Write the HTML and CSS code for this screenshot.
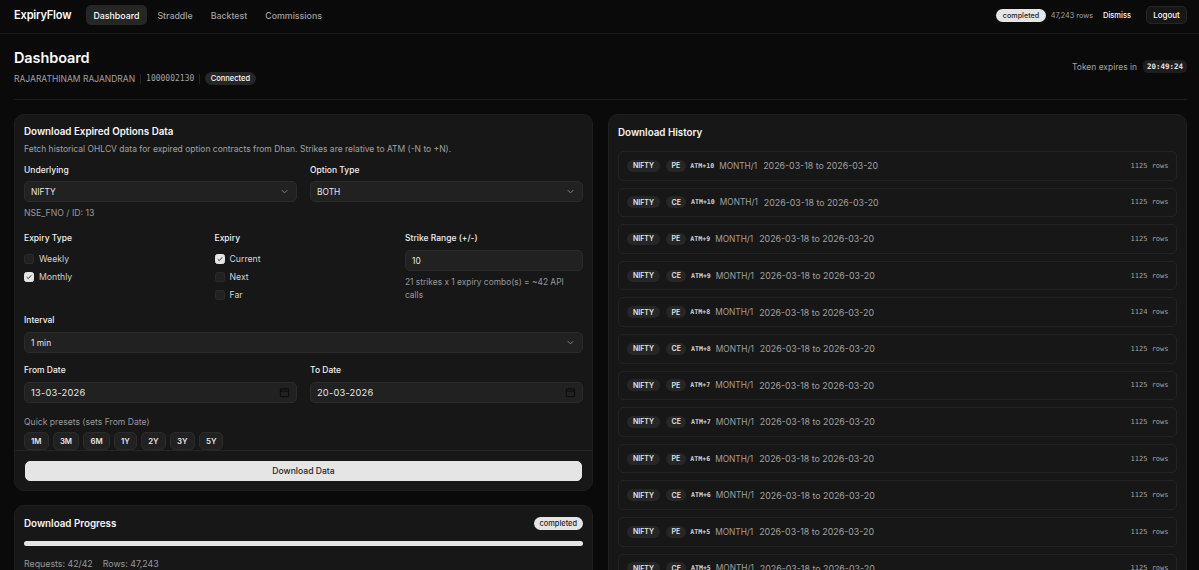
FILE: index.html
```html
<!DOCTYPE html>
<html lang="en">
<head>
<meta charset="utf-8">
<title>ExpiryFlow</title>
<link rel="stylesheet" href="styles.css">
</head>
<body>
<header class="topbar">
  <div class="brand">ExpiryFlow</div>
  <nav class="nav">
    <a class="nav-item active">Dashboard</a>
    <a class="nav-item">Straddle</a>
    <a class="nav-item">Backtest</a>
    <a class="nav-item">Commissions</a>
  </nav>
  <div class="top-right">
    <span class="pill-light top-pill">completed</span>
    <span class="top-rows">47,243 rows</span>
    <span class="dismiss">Dismiss</span>
    <span class="logout">Logout</span>
  </div>
</header>
<main class="main">
  <section class="page-head">
    <div>
      <h1 class="title">Dashboard</h1>
      <div class="meta">
        <span class="meta-name">RAJARATHINAM RAJANDRAN</span>
        <span class="meta-sep"></span>
        <span class="meta-id">1000002130</span>
        <span class="meta-sep"></span>
        <span class="conn">Connected</span>
      </div>
    </div>
    <div class="token">
      <span>Token expires in</span>
      <span class="timer">20:49:24</span>
    </div>
  </section>
  <div class="columns">
    <div class="col">
      <section class="card form-card">
        <div class="form-body">
          <h2 class="card-title">Download Expired Options Data</h2>
          <p class="desc">Fetch historical OHLCV data for expired option contracts from Dhan. Strikes are relative to ATM (-N to +N).</p>
          <div class="grid2 row-a">
            <div>
              <div class="label">Underlying</div>
              <div class="field"><span>NIFTY</span><svg class="chev" viewBox="0 0 16 16"><path d="M4 6l4 4 4-4"/></svg></div>
              <div class="hint hint-a">NSE_FNO / ID: 13</div>
            </div>
            <div>
              <div class="label">Option Type</div>
              <div class="field"><span>BOTH</span><svg class="chev" viewBox="0 0 16 16"><path d="M4 6l4 4 4-4"/></svg></div>
            </div>
          </div>
          <div class="grid3">
            <div>
              <div class="label">Expiry Type</div>
              <div class="checks">
                <div class="check"><span class="box"></span>Weekly</div>
                <div class="check"><span class="box on"><svg viewBox="0 0 12 12"><path d="M2.6 6.2l2.3 2.3 4.4-5"/></svg></span>Monthly</div>
              </div>
            </div>
            <div>
              <div class="label">Expiry</div>
              <div class="checks">
                <div class="check"><span class="box on"><svg viewBox="0 0 12 12"><path d="M2.6 6.2l2.3 2.3 4.4-5"/></svg></span>Current</div>
                <div class="check"><span class="box"></span>Next</div>
                <div class="check"><span class="box"></span>Far</div>
              </div>
            </div>
            <div>
              <div class="label">Strike Range (+/-)</div>
              <div class="field"><span>10</span></div>
              <div class="hint hint-b">21 strikes x 1 expiry combo(s) = ~42 API calls</div>
            </div>
          </div>
          <div class="block-interval">
            <div class="label">Interval</div>
            <div class="field"><span>1 min</span><svg class="chev" viewBox="0 0 16 16"><path d="M4 6l4 4 4-4"/></svg></div>
          </div>
          <div class="grid2 row-d">
            <div>
              <div class="label">From Date</div>
              <div class="field date"><span>13-03-2026</span><svg class="cal" viewBox="0 0 12 12"><rect x="1.5" y="2" width="9" height="8.5" rx="1"/><path d="M1.5 4.5h9"/></svg></div>
            </div>
            <div>
              <div class="label">To Date</div>
              <div class="field date"><span>20-03-2026</span><svg class="cal" viewBox="0 0 12 12"><rect x="1.5" y="2" width="9" height="8.5" rx="1"/><path d="M1.5 4.5h9"/></svg></div>
            </div>
          </div>
          <div class="presets-label">Quick presets (sets From Date)</div>
          <div class="presets">
            <span class="preset">1M</span><span class="preset">3M</span><span class="preset">6M</span><span class="preset">1Y</span><span class="preset">2Y</span><span class="preset">3Y</span><span class="preset">5Y</span>
          </div>
        </div>
        <div class="form-foot"><button class="submit" type="button">Download Data</button></div>
      </section>
      <section class="card progress-card">
        <div class="progress-head">
          <h2 class="card-title">Download Progress</h2>
          <span class="pill-light">completed</span>
        </div>
        <div class="bar"></div>
        <div class="stats"><span>Requests: 42/42</span><span>Rows: 47,243</span></div>
      </section>
    </div>
    <div class="col">
      <section class="card history">
        <h2 class="card-title history-title">Download History</h2>
        <div class="rows">
          <div class="row"><span class="tag tag-n">NIFTY</span><span class="tag tag-o">PE</span><span class="atm">ATM+10</span><span class="mm">MONTH/1</span><span class="range">2026-03-18 to 2026-03-20</span><span class="cnt">1125 rows</span></div>
          <div class="row"><span class="tag tag-n">NIFTY</span><span class="tag tag-o">CE</span><span class="atm">ATM+10</span><span class="mm">MONTH/1</span><span class="range">2026-03-18 to 2026-03-20</span><span class="cnt">1125 rows</span></div>
          <div class="row"><span class="tag tag-n">NIFTY</span><span class="tag tag-o">PE</span><span class="atm">ATM+9</span><span class="mm">MONTH/1</span><span class="range">2026-03-18 to 2026-03-20</span><span class="cnt">1125 rows</span></div>
          <div class="row"><span class="tag tag-n">NIFTY</span><span class="tag tag-o">CE</span><span class="atm">ATM+9</span><span class="mm">MONTH/1</span><span class="range">2026-03-18 to 2026-03-20</span><span class="cnt">1125 rows</span></div>
          <div class="row"><span class="tag tag-n">NIFTY</span><span class="tag tag-o">PE</span><span class="atm">ATM+8</span><span class="mm">MONTH/1</span><span class="range">2026-03-18 to 2026-03-20</span><span class="cnt">1124 rows</span></div>
          <div class="row"><span class="tag tag-n">NIFTY</span><span class="tag tag-o">CE</span><span class="atm">ATM+8</span><span class="mm">MONTH/1</span><span class="range">2026-03-18 to 2026-03-20</span><span class="cnt">1125 rows</span></div>
          <div class="row"><span class="tag tag-n">NIFTY</span><span class="tag tag-o">PE</span><span class="atm">ATM+7</span><span class="mm">MONTH/1</span><span class="range">2026-03-18 to 2026-03-20</span><span class="cnt">1125 rows</span></div>
          <div class="row"><span class="tag tag-n">NIFTY</span><span class="tag tag-o">CE</span><span class="atm">ATM+7</span><span class="mm">MONTH/1</span><span class="range">2026-03-18 to 2026-03-20</span><span class="cnt">1125 rows</span></div>
          <div class="row"><span class="tag tag-n">NIFTY</span><span class="tag tag-o">PE</span><span class="atm">ATM+6</span><span class="mm">MONTH/1</span><span class="range">2026-03-18 to 2026-03-20</span><span class="cnt">1125 rows</span></div>
          <div class="row"><span class="tag tag-n">NIFTY</span><span class="tag tag-o">CE</span><span class="atm">ATM+6</span><span class="mm">MONTH/1</span><span class="range">2026-03-18 to 2026-03-20</span><span class="cnt">1125 rows</span></div>
          <div class="row"><span class="tag tag-n">NIFTY</span><span class="tag tag-o">PE</span><span class="atm">ATM+5</span><span class="mm">MONTH/1</span><span class="range">2026-03-18 to 2026-03-20</span><span class="cnt">1125 rows</span></div>
          <div class="row"><span class="tag tag-n">NIFTY</span><span class="tag tag-o">CE</span><span class="atm">ATM+5</span><span class="mm">MONTH/1</span><span class="range">2026-03-18 to 2026-03-20</span><span class="cnt">1125 rows</span></div>
        </div>
      </section>
    </div>
  </div>
</main>
</body>
</html>
```
FILE: styles.css
```css
* { box-sizing: border-box; }
html, body { margin: 0; height: 100%; overflow: hidden; }
body {
  background: #0a0a0a;
  color: #fafafa;
  font-family: Inter, "Liberation Sans", sans-serif;
  font-size: 10px;
}
.topbar {
  height: 34px;
  border-bottom: 1px solid #1b1b1b;
  display: flex;
  align-items: center;
  padding: 0 12px 3px 14px;
}
.brand { font-size: 11.1px; font-weight: 600; width: 72px; letter-spacing: -0.2px; }
.nav { display: flex; align-items: center; gap: 3px; }
.nav-item {
  font-size: 8.8px;
  font-weight: 500;
  color: #a1a1a1;
  height: 20px;
  display: flex;
  align-items: center;
  padding: 0 7.5px;
  border-radius: 5px;
}
.nav-item.active { background: #262626; color: #fafafa; }
.top-right { margin-left: auto; display: flex; align-items: center; }
.pill-light {
  background: #e5e5e5;
  color: #262626;
  border-radius: 999px;
  font-weight: 500;
  display: flex;
  align-items: center;
}
.top-pill { font-size: 7.2px; height: 13px; padding: 0 6.5px; }
.top-rows { font-size: 7.3px; color: #a1a1a1; margin-left: 5px; }
.dismiss { font-size: 7.5px; font-weight: 500; margin-left: 10px; }
.logout {
  font-size: 8px;
  font-weight: 500;
  height: 18px;
  width: 41px;
  margin-left: 15px;
  display: flex;
  align-items: center;
  justify-content: center;
  background: #171717;
  border: 1px solid #262626;
  border-radius: 5px;
}
.main { padding: 0 12px 0 14px; }
.page-head {
  height: 66px;
  border-bottom: 1px solid #1f1f1f;
  display: flex;
  justify-content: space-between;
  align-items: center;
}
.title { margin: 0 0 4px; font-size: 14.5px; line-height: 20px; font-weight: 600; letter-spacing: -0.1px; }
.meta { display: flex; align-items: center; height: 13px; }
.meta-name { font-size: 8.5px; color: #a1a1a1; }
.meta-sep { width: 1px; height: 10px; background: #262626; margin: 0 5px; }
.meta-id { font-family: "DejaVu Sans Mono", monospace; font-size: 8px; color: #a1a1a1; }
.conn {
  background: #262626;
  border-radius: 999px;
  font-size: 7.5px;
  font-weight: 500;
  height: 13px;
  padding: 0 5.5px;
  display: flex;
  align-items: center;
}
.token { display: flex; align-items: center; gap: 6px; font-size: 8.45px; color: #a1a1a1; }
.timer {
  font-family: "DejaVu Sans Mono", monospace;
  font-size: 7.5px;
  font-weight: 700;
  color: #e5e5e5;
  background: #1e1e1e;
  height: 13px;
  width: 44px;
  border-radius: 5px;
  display: flex;
  align-items: center;
  justify-content: center;
}
.columns {
  display: grid;
  grid-template-columns: 579px 579px;
  gap: 15px;
  padding-top: 14px;
}
.col { display: flex; flex-direction: column; gap: 14px; }
.card {
  background: #171717;
  border: 1px solid #1f1f1f;
  border-radius: 10px;
}
.form-card { height: 377px; display: flex; flex-direction: column; }
.form-body { padding: 10px 9px 0; flex: 1; }
.card-title { margin: 0; font-size: 9.8px; line-height: 14px; font-weight: 600; color: #f5f5f5; }
.desc { margin: 4px 0 0; font-size: 8.5px; line-height: 13px; color: #a1a1a1; }
.label { font-size: 8.5px; line-height: 12px; font-weight: 500; color: #f0f0f0; margin-bottom: 5px; }
.grid2 { display: grid; grid-template-columns: 1fr 1fr; gap: 13px; }
.row-a { margin-top: 8px; height: 53px; }
.field {
  height: 21px;
  background: #212121;
  border: 1px solid #2b2b2b;
  border-radius: 5px;
  padding: 0 6px;
  display: flex;
  align-items: center;
  justify-content: space-between;
  font-size: 8.4px;
  color: #e5e5e5;
}
.chev { width: 11px; height: 11px; fill: none; stroke: #8a8a8a; stroke-width: 1.3; }
.cal { width: 11px; height: 11px; fill: none; stroke: #0d0d0d; stroke-width: 1.2; }
.hint { font-size: 8.7px; line-height: 13px; color: #999; }
.hint-a { margin-top: 5px; }
.hint-b { margin-top: 5px; font-size: 8.4px; }
.grid3 { display: grid; grid-template-columns: 177.5px 177.5px 1fr; gap: 13px; margin-top: 15px; height: 68px; }
.grid3 .label { margin-bottom: 6px; }
.checks { display: flex; flex-direction: column; gap: 6.5px; margin-top: 9.5px; }
.check { display: flex; align-items: center; gap: 5px; height: 11.5px; font-size: 8.7px; color: #d4d4d4; }
.box { width: 10px; height: 10px; border-radius: 2.5px; background: #212121; border: 1px solid #2b2b2b; }
.box.on { background: #e5e5e5; border-color: #e5e5e5; display: flex; }
.box svg { width: 8px; height: 8px; fill: none; stroke: #262626; stroke-width: 1.4; }
.block-interval { margin-top: 15px; }
.block-interval .label, .row-d .label { margin-top: -1px; margin-bottom: 6px; }
.row-d { margin-top: 12px; }
.date span { font-size: 9.3px; letter-spacing: 0.2px; }
.presets-label { margin-top: 13px; font-size: 8.6px; line-height: 12px; color: #999; }
.presets { display: flex; gap: 4.4px; margin-top: 4px; }
.preset {
  height: 18px;
  padding: 0 6px;
  display: flex;
  align-items: center;
  font-size: 7.8px;
  font-weight: 600;
  color: #e5e5e5;
  background: #212121;
  border: 1px solid #2b2b2b;
  border-radius: 5px;
}
.form-foot { border-top: 1px solid #242424; height: 40px; padding: 10px; }
.submit {
  width: 100%;
  height: 20px;
  padding: 0;
  border: 1px solid #e5e5e5;
  border-radius: 5px;
  background: #e5e5e5;
  color: #262626;
  font: 500 8.6px Inter, "Liberation Sans", sans-serif;
}
.progress-card { padding: 10px 9px; height: 140px; }
.progress-head { display: flex; justify-content: space-between; align-items: center; height: 15px; }
.progress-head .pill-light { font-size: 7.4px; height: 13px; padding: 0 6px; }
.bar { height: 5px; margin-top: 10px; background: #e5e5e5; border-radius: 3px; }
.stats { display: flex; gap: 10px; margin-top: 12px; font-size: 8.8px; color: #999; }
.history { padding: 9px 9px; height: 600px; }
.history-title { margin-bottom: 11px; line-height: 15px; margin-top: 1px; }
.rows { display: flex; flex-direction: column; gap: 7px; }
.row {
  height: 29.6px;
  flex: none;
  border: 1px solid #232323;
  border-radius: 5px;
  display: flex;
  align-items: center;
  padding: 0 7.5px 0 8px;
}
.tag {
  height: 12px;
  display: flex;
  align-items: center;
  background: #262626;
  border-radius: 999px;
  font-size: 7px;
  font-weight: 600;
  color: #e5e5e5;
  padding: 0 6px;
}
.tag-o { margin-left: 6px; padding: 0 5.5px; }
.atm { font-family: "DejaVu Sans Mono", monospace; font-weight: 700; font-size: 6.6px; color: #d4d4d4; margin-left: 4.5px; }
.mm { font-size: 8.3px; color: #a1a1a1; margin-left: 5px; }
.range { font-size: 8.85px; color: #a1a1a1; margin-left: 6px; }
.cnt { margin-left: auto; font-family: "DejaVu Sans Mono", monospace; font-size: 7px; color: #a1a1a1; }
```
